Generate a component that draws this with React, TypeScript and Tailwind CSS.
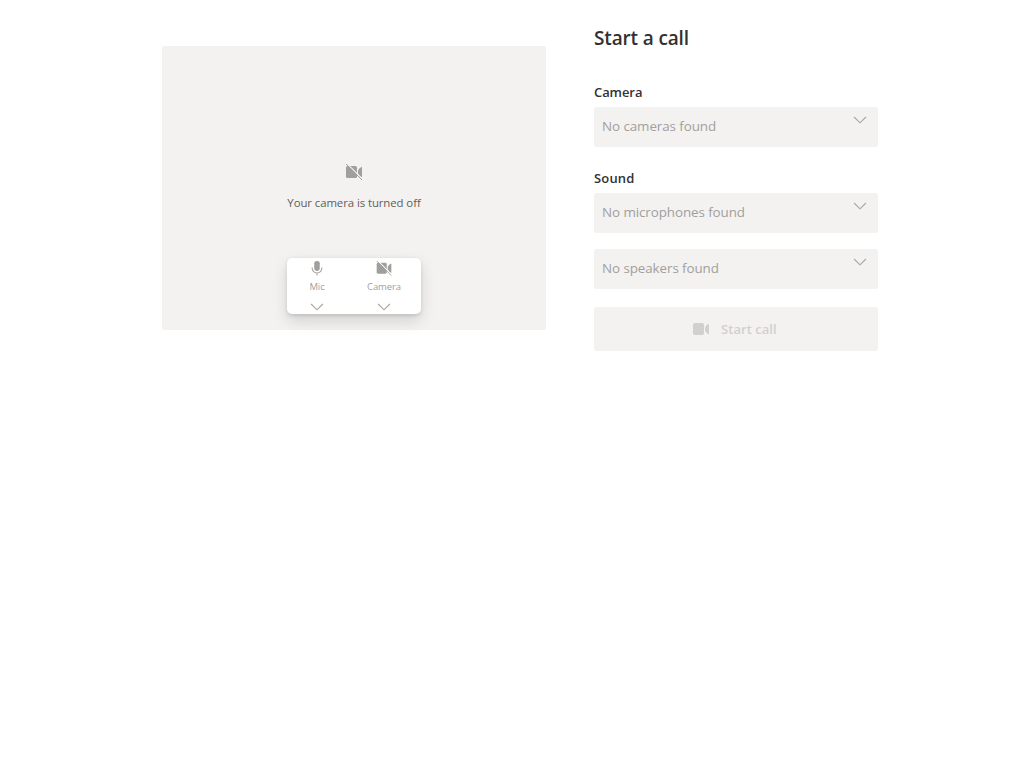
import React from "react";

const Chevron = () => (
  <svg width="14" height="14" viewBox="0 0 14 14" fill="none" stroke="#a8a6a4" strokeWidth="1.15" className="block">
    <path d="M1.1 4 7 9.8l5.9-5.8" />
  </svg>
);

const Video = () => (
  <svg width="16" height="16" viewBox="0 0 16 16" fill="currentColor" className="block">
    <rect x="0" y="2" width="11" height="12" rx="2" />
    <path d="M12 6.6Q13 4 15.3 3Q16 2.7 16 3.5V12.5Q16 13.3 15.3 13Q13 12 12 9.4Z" />
  </svg>
);

const VideoOff = ({ slash }: { slash: string }) => (
  <svg width="18" height="18" viewBox="-1 -1 18 18" fill="currentColor" className="block">
    <rect x="0" y="2" width="11" height="12" rx="1.6" />
    <path d="M12 6.6Q13 4 15.3 3Q16 2.7 16 3.5V12.5Q16 13.3 15.3 13Q13 12 12 9.4Z" />
    <path d="M1-.4 17 15.6" stroke={slash} strokeWidth="1.1" />
    <path d="M.1.1 16 16" stroke="currentColor" strokeWidth="1" />
  </svg>
);

const Mic = () => (
  <svg width="18" height="18" viewBox="0 0 18 18" fill="none" className="block">
    <rect x="6" y="1" width="6" height="11" rx="2.6" fill="currentColor" />
    <path d="M3.7 8.2v.9a5.3 5 0 0 0 10.6 0v-.9M9 14.1V17" stroke="currentColor" strokeWidth="1.1" />
  </svg>
);

const Select = ({ text }: { text: string }) => (
  <div className="flex h-10 justify-between rounded-[2px] bg-[#f3f2f1] pl-2 pr-[11px] text-[#a19f9d]">
    <span className="text-[13.4px] leading-[38px] tracking-[-0.08px] whitespace-nowrap">{text}</span>
    <span className="pt-[6px]"><Chevron /></span>
  </div>
);

export default function App() {
  return (
    <main className="flex h-screen items-start bg-white pl-[162px] font-['Open_Sans','Noto_Sans',sans-serif] text-[#323130]">
      <section className="mt-[46px] flex h-[284px] w-96 flex-col items-center rounded-[2px] bg-[#f3f2f1] pt-[117px]">
        <span className="text-[#a19f9d]"><VideoOff slash="#f3f2f1" /></span>
        <p className="mt-[14px] text-[11.4px] leading-4 tracking-[-0.08px] whitespace-nowrap text-[#605e5c]">Your camera is turned off</p>
        <div className="mt-[47px] flex h-14 w-[134px] rounded-[5px] bg-white text-[#a19f9d] shadow-[0_6.4px_14.4px_rgba(0,0,0,0.13),0_1.2px_3.6px_rgba(0,0,0,0.11)]">
          <div className="flex w-[60px] flex-col items-center pt-[1.5px]">
            <Mic />
            <span className="mt-[3.5px] text-[9.5px] leading-[14px] tracking-[-0.1px]">Mic</span>
            <span className="mt-[6.5px]"><Chevron /></span>
          </div>
          <div className="flex w-[74px] flex-col items-center pt-[1.5px]">
            <VideoOff slash="#ffffff" />
            <span className="mt-[3.5px] text-[9.5px] leading-[14px] tracking-[-0.1px]">Camera</span>
            <span className="mt-[6.5px]"><Chevron /></span>
          </div>
        </div>
      </section>
      <section className="ml-12 w-[284px] pt-6">
        <h1 className="text-[19px] leading-7 font-semibold tracking-[-0.15px]">Start a call</h1>
        <h2 className="mt-[30px] mb-[5px] text-[13px] leading-5 font-semibold tracking-[-0.08px]">Camera</h2>
        <Select text="No cameras found" />
        <h2 className="mt-[21px] mb-[5px] text-[13px] leading-5 font-semibold tracking-[0.15px]">Sound</h2>
        <Select text="No microphones found" />
        <div className="mt-4">
          <Select text="No speakers found" />
        </div>
        <button disabled className="mt-[18px] flex h-11 w-full items-center rounded-[2px] bg-[#f3f2f1] pl-[99px] text-[#d2d0ce]">
          <Video />
          <span className="ml-3 text-[13px] leading-5 font-semibold tracking-[0.05px]">Start call</span>
        </button>
      </section>
    </main>
  );
}
